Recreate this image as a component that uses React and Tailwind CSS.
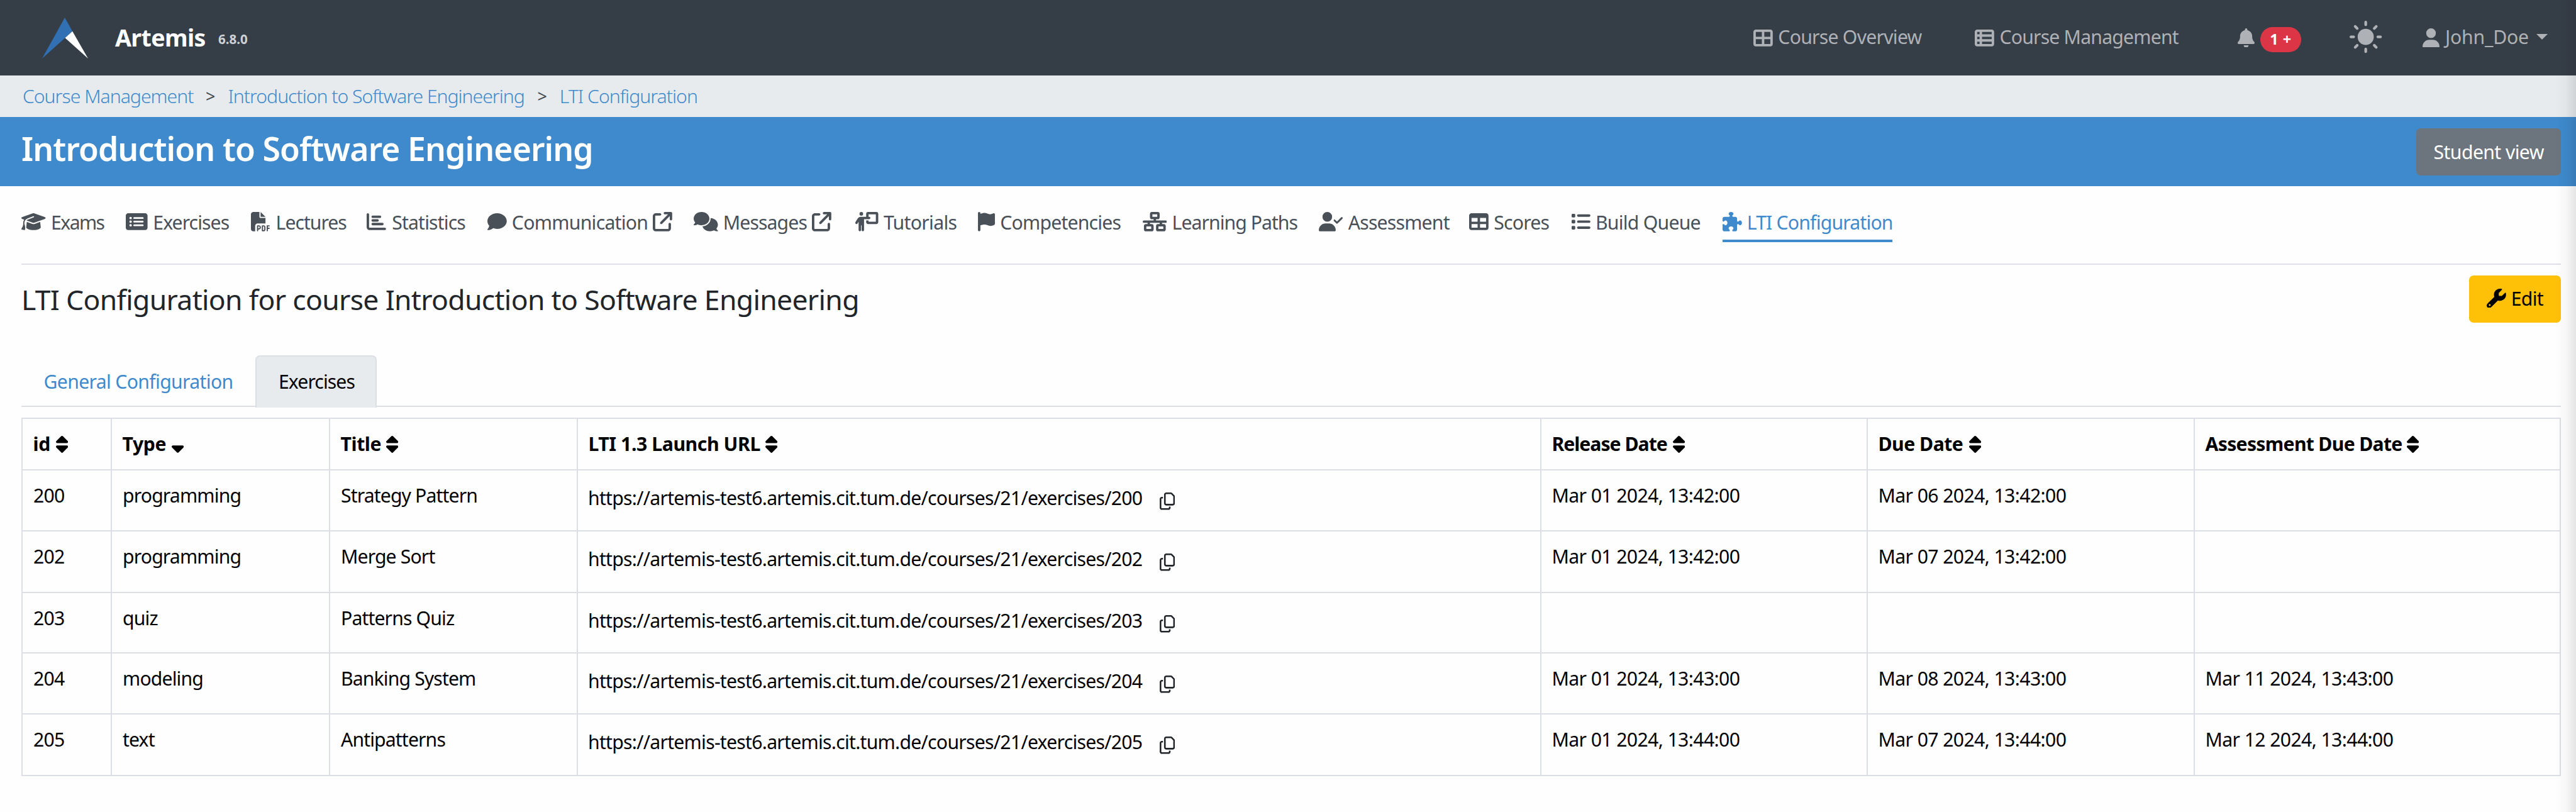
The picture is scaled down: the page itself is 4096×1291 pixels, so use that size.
import React from "react";
import {
  FaTableCellsLarge, FaTableList, FaBell, FaUser, FaGraduationCap, FaRectangleList, FaFilePdf, FaChartBar,
  FaComment, FaComments, FaArrowUpRightFromSquare, FaPersonChalkboard, FaFlag, FaNetworkWired, FaUserCheck,
  FaTable, FaList, FaPuzzlePiece, FaWrench, FaSort, FaSortDown, FaRegCopy,
} from "react-icons/fa6";

const W640 = "h-[30.8px] w-[38.5px] shrink-0";
const W576 = "h-[30.8px] w-[34.6px] shrink-0";
const W512 = "h-[30.8px] w-[30.8px] shrink-0";
const W448 = "h-[30.8px] w-[27px] shrink-0";

const TABS = [
  { label: "Exams", Icon: FaGraduationCap, icon: W640, box: "w-[166.1px]", track: "tracking-[-1.6px]" },
  { label: "Exercises", Icon: FaRectangleList, icon: W576, box: "w-[198.1px]", track: "tracking-[-0.92px]" },
  { label: "Lectures", Icon: FaFilePdf, icon: W512, box: "w-[184.7px]", track: "tracking-[-1px]", text: "ml-px" },
  { label: "Statistics", Icon: FaChartBar, icon: W512, box: "w-[191.6px]", track: "tracking-[-0.85px]", text: "ml-px" },
  { label: "Communication", Icon: FaComment, icon: W512, box: "w-[328.3px]", track: "tracking-[-0.73px]", text: "w-[216.2px]", ext: true },
  { label: "Messages", Icon: FaComments, icon: W640, box: "w-[255.2px]", track: "tracking-[-0.9px]", text: "w-[133.3px]", ext: true },
  { label: "Tutorials", Icon: FaPersonChalkboard, icon: W640, box: "w-[196.7px]", track: "tracking-[-0.7px]" },
  { label: "Competencies", Icon: FaFlag, icon: W448, box: "w-[261.9px]", track: "tracking-[-0.8px]" },
  { label: "Learning Paths", Icon: FaNetworkWired, icon: W640, box: "w-[280.2px]", track: "tracking-[-0.97px]" },
  { label: "Assessment", Icon: FaUserCheck, icon: W640, box: "w-[239.2px]", track: "tracking-[-0.8px]" },
  { label: "Scores", Icon: FaTable, icon: W512, box: "w-[161.6px]", track: "tracking-[-0.8px]" },
  { label: "Build Queue", Icon: FaList, icon: W512, box: "w-[240.9px]", track: "tracking-[-0.75px]" },
  { label: "LTI Configuration", Icon: FaPuzzlePiece, icon: W512, box: "w-[270.5px]", track: "tracking-[-0.82px]", active: true },
];

const COLS = ["w-[142px]", "w-[347px]", "w-[394px]", "w-[1532px]", "w-[519px]", "w-[520px]", "w-[584px] border-r-2"];

const HEADS = [
  { label: "id", text: "w-[36px]", track: "tracking-[-0.4px]" },
  { label: "Type", text: "w-[78px]", track: "tracking-[-0.4px]", down: true },
  { label: "Title", text: "w-[72.5px]", track: "tracking-[-0.4px]" },
  { label: "LTI 1.3 Launch URL", text: "w-[281px]", track: "tracking-[-0.42px]" },
  { label: "Release Date", text: "w-[192.5px]", track: "tracking-[-1px]" },
  { label: "Due Date", text: "w-[144px]", track: "tracking-[-0.5px]" },
  { label: "Assessment Due Date", text: "w-[320.4px]", track: "tracking-[-0.7px]" },
];

const ROWS = [
  { id: "200", type: "programming", title: "Strategy Pattern", dates: ["Mar 01 2024, 13:42:00", "Mar 06 2024, 13:42:00", ""], h: "h-[97px]" },
  { id: "202", type: "programming", title: "Merge Sort", dates: ["Mar 01 2024, 13:42:00", "Mar 07 2024, 13:42:00", ""], h: "h-[98px]" },
  { id: "203", type: "quiz", title: "Patterns Quiz", dates: ["", "", ""], h: "h-[96px]" },
  { id: "204", type: "modeling", title: "Banking System", dates: ["Mar 01 2024, 13:43:00", "Mar 08 2024, 13:43:00", "Mar 11 2024, 13:43:00"], h: "h-[97px]" },
  { id: "205", type: "text", title: "Antipatterns", dates: ["Mar 01 2024, 13:44:00", "Mar 07 2024, 13:44:00", "Mar 12 2024, 13:44:00"], h: "h-[98px]" },
];

function Logo() {
  return (
    <svg viewBox="0 0 73 65" className="h-[65px] w-[73px] shrink-0">
      <path d="M36 0 L48.2 21.8 L36.5 32.3 L0 65 Z" fill="#3070b3" />
      <path d="M48.2 21.8 L73 65 L36.5 32.3 Z" fill="#fff" />
    </svg>
  );
}

function Sun() {
  return (
    <svg viewBox="0 0 288 288" className="h-[51.3px] w-[51.3px] shrink-0" fill="currentColor" stroke="currentColor" strokeWidth="24" strokeLinecap="round">
      <circle cx="144" cy="144" r="72" stroke="none" />
      <path d="M144 12v24M144 252v24M12 144h24M252 144h24M50 51l18 18M220 219l18 18M238 51l-18 18M68 219l-18 18" />
    </svg>
  );
}

function Navbar() {
  return (
    <header className="flex h-[120px] items-center bg-[#353d47] pl-[67px] text-[#aeb1b5]">
      <Logo />
      <span className="ml-[43px] w-[164px] text-[37.5px] font-bold leading-[50px] tracking-[-0.6px] text-white">Artemis</span>
      <span className="mt-[4px] text-[20.5px] font-bold leading-[28px] text-[#ced2d6]">6.8.0</span>
      <nav className="ml-auto flex items-center">
        <a className="flex w-[352.1px] items-center gap-[8.2px]">
          <FaTableCellsLarge className={W512} />
          <span className="-mt-[1px] tracking-[-0.75px]">Course Overview</span>
        </a>
        <a className="flex w-[417.8px] items-center gap-[8.2px]">
          <FaTableList className={W512} />
          <span className="-mt-[1px] tracking-[-0.8px]">Course Management</span>
        </a>
        <div className="flex w-[178px] items-center">
          <FaBell className={W448} />
          <span className="ml-[9px] mt-[6px] flex h-[39.4px] w-[65.2px] items-center gap-[7px] rounded-[19.7px] bg-[#dc3545] pb-[2px] pl-[15px] text-[23.5px] font-bold leading-[30px] text-white">
            <span>1</span>
            <span>+</span>
          </span>
        </div>
        <div className="-mt-[2px] flex w-[115.7px] items-center">
          <Sun />
        </div>
        <a className="flex w-[244.1px] items-center">
          <FaUser className={W448} />
          <span className="-mt-[1px] ml-[9px] w-[145.5px] tracking-[-0.2px]">John_Doe</span>
          <span className="-mt-[2px] h-0 w-0 border-x-[9px] border-t-[9px] border-x-transparent border-t-[#aeb1b5]" />
        </a>
      </nav>
    </header>
  );
}

function Breadcrumb() {
  return (
    <div className="flex h-[66px] items-center bg-[#e7ebee] pl-[36px] font-light text-[#3e8acc]">
      <a className="w-[291px] tracking-[-1px]">Course Management</a>
      <span className="w-[35.5px] text-[27px] font-normal text-[#444a50]">&gt;</span>
      <a className="w-[492px] tracking-[-1.03px]">Introduction to Software Engineering</a>
      <span className="w-[35.3px] text-[27px] font-normal text-[#444a50]">&gt;</span>
      <a className="tracking-[-0.98px]">LTI Configuration</a>
    </div>
  );
}

function Tab({ label, Icon, icon, box, track, text = "", ext, active }) {
  return (
    <a className={`flex h-[65px] shrink-0 items-center gap-[8.2px] border-b-4 pt-[4px] ${box} ${active ? "border-[#3e8acc] text-[#3e8acc]" : "border-transparent text-[#495057]"}`}>
      <Icon className={icon} />
      <span className={`mt-[2px] shrink-0 ${track} ${text}`}>{label}</span>
      {ext && <FaArrowUpRightFromSquare className={W512} />}
    </a>
  );
}

function ExerciseTable() {
  return (
    <div className="mt-[17px] w-[4038px] border-t-2 border-[#dcdfe6] text-black">
      <div className="flex h-[82px] border-b-2 border-[#dcdfe6] font-bold">
        {HEADS.map((h, i) => (
          <div key={h.label} className={`flex shrink-0 items-center border-l-2 border-[#dcdfe6] pl-[16.5px] ${COLS[i]}`}>
            <span className={`shrink-0 ${h.text} ${h.track}`}>{h.label}</span>
            {h.down ? <FaSortDown className="h-[30.8px] w-[19.3px]" /> : <FaSort className="h-[30.8px] w-[19.3px]" />}
          </div>
        ))}
      </div>
      {ROWS.map((r) => (
        <div key={r.id} className={`flex border-b-2 border-[#dcdfe6] ${r.h}`}>
          <div className={`shrink-0 border-l-2 border-[#dcdfe6] pl-[17px] pt-[17px] tracking-[-0.8px] ${COLS[0]}`}>{r.id}</div>
          <div className={`shrink-0 border-l-2 border-[#dcdfe6] pl-[17px] pt-[17px] tracking-[-0.85px] ${COLS[1]}`}>{r.type}</div>
          <div className={`shrink-0 border-l-2 border-[#dcdfe6] pl-[17px] pt-[17px] tracking-[-0.88px] ${COLS[2]}`}>{r.title}</div>
          <div className={`flex shrink-0 items-start border-l-2 border-[#dcdfe6] pl-[16px] pt-[21px] ${COLS[3]}`}>
            <span className="w-[909px] shrink-0 tracking-[-0.73px]">{`https://artemis-test6.artemis.cit.tum.de/courses/21/exercises/${r.id}`}</span>
            <FaRegCopy className="mt-[14px] h-[27.6px] w-[24.2px] text-[#212529]" />
          </div>
          {r.dates.map((d, i) => (
            <div key={i} className={`shrink-0 border-l-2 border-[#dcdfe6] pl-[16.5px] pt-[17px] tracking-[-0.62px] ${COLS[4 + i]}`}>{d}</div>
          ))}
        </div>
      ))}
    </div>
  );
}

export default function App() {
  return (
    <div className="relative h-[1291px] w-[4096px] overflow-hidden whitespace-nowrap bg-[#fefefe] font-['Noto_Sans',sans-serif] text-[30.2px] leading-[46px]">
      <Navbar />
      <Breadcrumb />
      <div className="flex h-[110px] justify-between bg-[#3e8acc] pl-[34px] pr-[24.5px] text-white">
        <h1 className="mt-[15px] text-[51.7px] font-semibold leading-[70px] tracking-[-0.9px]">Introduction to Software Engineering</h1>
        <button className="mt-[17.5px] h-[75.3px] w-[229.6px] rounded-[7px] bg-[#6c757d] pl-[1px] pt-[2px] tracking-[-0.6px]">Student view</button>
      </div>
      <nav className="mt-[24px] flex pl-[34.4px]">
        {TABS.map((t) => (
          <Tab key={t.label} {...t} />
        ))}
      </nav>
      <main className="pl-[34px] pr-[24.5px]">
        <div className="mt-[34px] h-[2px] bg-[#dfe0e8]" />
        <div className="mt-[17px] flex h-[75px] items-center justify-between">
          <h2 className="text-[44.5px] leading-[60px] tracking-[-0.68px] text-[#212529]">LTI Configuration for course Introduction to Software Engineering</h2>
          <button className="flex h-[75.3px] w-[145.2px] items-center rounded-[7px] bg-[#ffc107] pb-[3px] pl-[27.6px] text-black">
            <FaWrench className={W512} />
            <span className="ml-[8px] mt-[2px] tracking-[-0.7px]">Edit</span>
          </button>
        </div>
        <div className="mt-[52px] flex h-[82px] border-b-2 border-[#dcdfe6]">
          <a className="w-[372px] pl-[35.5px] pt-[19px] tracking-[-0.66px] text-[#3e8acc]">General Configuration</a>
          <a className="h-[83px] w-[192.5px] rounded-t-[7px] border-2 border-b-0 border-[#dcdfe4] bg-[#e7ebee] pl-[35px] pt-[17px] tracking-[-0.92px] text-black">Exercises</a>
        </div>
        <ExerciseTable />
      </main>
      <div className="pointer-events-none absolute inset-y-0 right-0 w-[34px] bg-[linear-gradient(to_right,rgba(0,0,0,0),rgba(0,0,0,0.025)_50%,rgba(0,0,0,0.1))]" />
    </div>
  );
}
